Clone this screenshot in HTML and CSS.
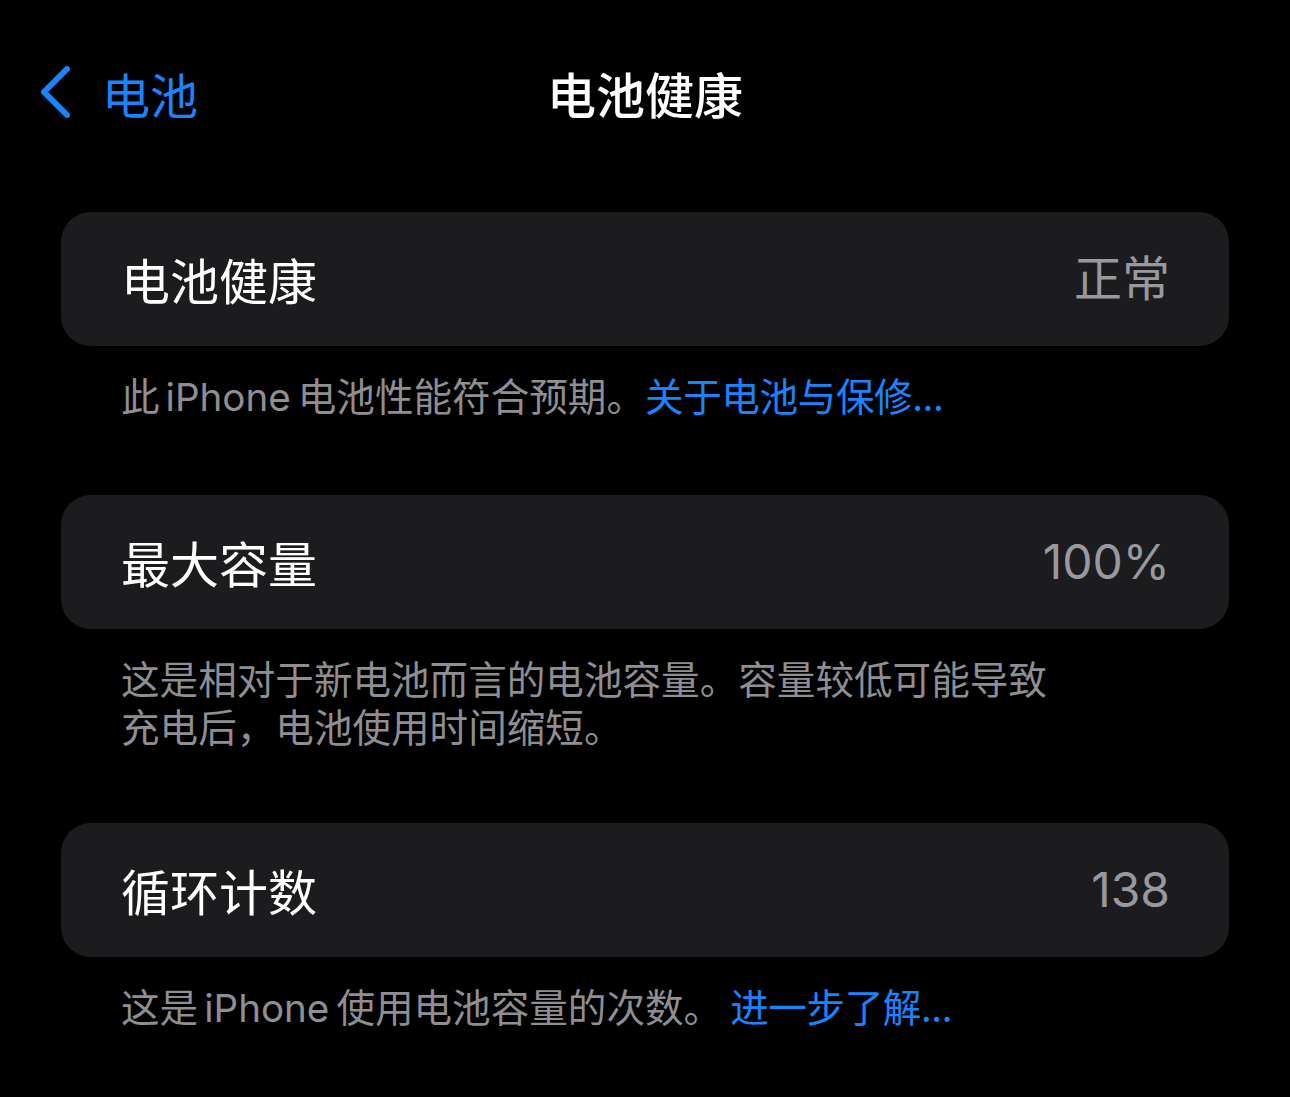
FILE: index.html
```html
<!DOCTYPE html>
<html lang="zh-CN">
<head>
<meta charset="utf-8">
<title>电池健康</title>
<link rel="stylesheet" href="styles.css">
</head>
<body>
<div class="screen">
  <header class="nav">
    <a class="back" href="#">
      <svg class="chevron" width="40" height="60" viewBox="0 0 40 60" aria-hidden="true">
        <path d="M31 6 L8 29 L31 52" fill="none" stroke="#1a84ff" stroke-width="6" stroke-linecap="round" stroke-linejoin="round"/>
      </svg>
      <span class="back-label">电池</span>
    </a>
    <h1 class="nav-title">电池健康</h1>
    <div class="nav-spacer"></div>
  </header>

  <main class="list">
    <section class="group">
      <div class="cell">
        <span class="cell-label">电池健康</span>
        <span class="cell-value">正常</span>
      </div>
      <p class="footnote">此<span class="latin">iPhone</span>电池性能符合预期。<a class="link" href="#">关于电池与保修...</a></p>
    </section>

    <section class="group">
      <div class="cell">
        <span class="cell-label">最大容量</span>
        <span class="cell-value">100%</span>
      </div>
      <p class="footnote">这是相对于新电池而言的电池容量。容量较低可能导致<br>充电后，电池使用时间缩短。</p>
    </section>

    <section class="group">
      <div class="cell">
        <span class="cell-label">循环计数</span>
        <span class="cell-value">138</span>
      </div>
      <p class="footnote">这是<span class="latin">iPhone</span>使用电池容量的次数。<a class="link link-gap" href="#">进一步了解...</a></p>
    </section>
  </main>
</div>
</body>
</html>
```

FILE: styles.css
```css
* {
  box-sizing: border-box;
}

html, body {
  margin: 0;
  padding: 0;
  background: #000;
}

body {
  font-family: Inter, "Noto Sans CJK SC", sans-serif;
  color: #fff;
  width: 1290px;
  height: 1097px;
  overflow: hidden;
}

.screen {
  display: flex;
  flex-direction: column;
}

/* navigation bar */
.nav {
  display: grid;
  grid-template-columns: 1fr auto 1fr;
  align-items: center;
  height: 186px;
  padding: 0 36px;
}

.back {
  display: flex;
  align-items: center;
  gap: 26px;
  text-decoration: none;
  color: #1a84ff;
}

.chevron {
  display: block;
}

.back-label {
  font-family: "Noto Sans CJK SC", sans-serif;
  font-size: 48px;
  line-height: 60px;
  font-weight: 400;
}

.nav-title {
  margin: 0;
  font-family: "Noto Sans CJK SC", sans-serif;
  font-size: 49px;
  line-height: 60px;
  font-weight: 500;
  color: #fff;
}

/* grouped list */
.list {
  display: flex;
  flex-direction: column;
  gap: 74px;
  padding: 26px 61px 0;
}

.cell {
  display: flex;
  justify-content: space-between;
  align-items: center;
  height: 134px;
  padding: 0 62px;
  background: #1c1c1e;
  border-radius: 30px;
}

.cell-label {
  font-family: "Noto Sans CJK SC", sans-serif;
  font-size: 49px;
  line-height: 60px;
  color: #fff;
  margin-left: -2px;
}

.cell-value {
  font-size: 48px;
  line-height: 60px;
  color: #98989f;
  font-family: Inter, "Noto Sans CJK SC", sans-serif;
  margin-right: -3px;
}

.footnote {
  margin: 24px 0 0;
  padding: 0 60px;
  font-family: "Noto Sans CJK SC", sans-serif;
  font-size: 38.6px;
  line-height: 48px;
  color: #8e8e93;
}

.latin {
  font-family: Inter, sans-serif;
  margin: 0 7px 0 6px;
}

.link {
  color: #1a84ff;
  text-decoration: none;
  letter-spacing: -0.4px;
}

.link-gap {
  margin-left: 8px;
}
```
